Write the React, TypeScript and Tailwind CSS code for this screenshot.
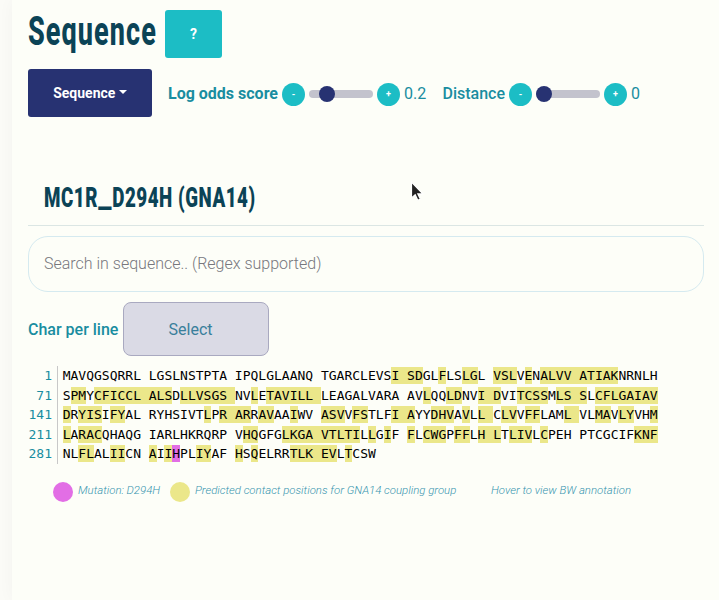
import React from "react";

/* Square brackets wrap contact positions, braces wrap the mutated residue. */
const ROWS: { start: number; seq: string }[] = [
  { start: 1, seq: "MAVQGSQRRL LGSLNSTPTA IPQLGLAANQ TGARCLEVS[I SD]GL[F]LS[LG]L [VSL]V[E]N[ALVV ATIAK]NRNLH" },
  { start: 71, seq: "S[PM]Y[CFICCL ALS]D[LLVSGS ]NV[L]E[TAVILL ]LEAGALVARA AV[L]QQ[LD]NV[I D]VI[TCSS]M[LS S]L[CFLGAIAV]" },
  { start: 141, seq: "[D]R[YIS]I[FY]AL RYHSIVT[L]P[R AR]R[AV]AA[I]WV [ASV]V[FS]TLF[I A]YY[DHV]A[V]L[L ]C[LV]V[FF]LAM[L ]VL[MA]V[LY]VH[M]" },
  { start: 211, seq: "[L]A[RAC]QHAQG IARLHKRQRP V[HQ]GFG[LKGA VTLTI]L[L]G[I]F [F]L[CWG]P[FF]L[H L]T[LIV]L[C]PEH PTCGCIF[KNF]" },
  { start: 281, seq: "NL[FL]AL[II]CN [A]I[I]{H}PL[IY]AF [H]S[Q]ELRR[TLK EV]L[T]CSW" },
];

function SequenceLine({ seq }: { seq: string }) {
  const parts = seq.match(/\[[^\]]*\]|\{[^}]*\}|[^[{]+/g) ?? [];
  return (
    <div className="h-[19.5px] whitespace-pre">
      {parts.map((p, i) => {
        if (p[0] === "[") return <span key={i} className="bg-[#ebe78a] py-px">{p.slice(1, -1)}</span>;
        if (p[0] === "{") return <span key={i} className="bg-[#e26ee5] py-px">{p.slice(1, -1)}</span>;
        return <span key={i}>{p}</span>;
      })}
    </div>
  );
}

function RoundButton({ label }: { label: string }) {
  return (
    <button className="flex h-[23px] w-[23px] shrink-0 items-center justify-center rounded-full bg-[#1cbdc5] text-[9px] font-bold leading-none text-white">
      {label}
    </button>
  );
}

function Slider({ value }: { value: number }) {
  return (
    <div className="mx-1 flex h-4 w-16 shrink-0 items-center">
      <div className="h-2 w-full rounded-full bg-[#c3c3cd]">
        <div className="-mt-1 h-4 w-4 rounded-full bg-[#273272]" style={{ marginLeft: value * 48 }} />
      </div>
    </div>
  );
}

export default function App() {
  return (
    <div className="h-[600px] w-[719px] overflow-hidden bg-[#fbfbf7] pl-3 font-['Roboto','Liberation_Sans',sans-serif] text-[#198da0]">
      <main className="h-full bg-[#fdfef8] pl-4 pr-[15px] shadow-[0_0_16px_rgba(0,0,0,0.035)]">
        <header className="flex h-[58px] items-start pt-[10px]">
          <h1 className="w-[137px] shrink-0 whitespace-nowrap text-[#0b4356]">
            <span className="inline-block origin-left scale-x-[0.675] text-[40px] font-extrabold leading-[44px] tracking-[1.6px]">Sequence</span>
          </h1>
          <button className="h-12 w-[57px] rounded-[3px] bg-[#1cbdc5] text-sm font-bold text-white">?</button>
        </header>

        <div className="mt-[11px] flex h-12 items-center">
          <button className="flex h-12 w-[124px] shrink-0 items-center justify-center rounded-[3px] bg-[#273272] text-sm font-bold text-white">
            Sequence
            <span className="mb-[3px] ml-[3.5px] h-0 w-0 border-x-[4.2px] border-t-[4.2px] border-x-transparent border-t-white" />
          </button>
          <div className="ml-4 flex w-[274.5px] shrink-0 items-center pt-[2px]">
            <span className="w-[114px] shrink-0 whitespace-nowrap font-bold leading-none">Log odds score</span>
            <RoundButton label="-" />
            <Slider value={0.21} />
            <RoundButton label="+" />
            <span className="ml-1 leading-none">0.2</span>
          </div>
          <div className="flex items-center pt-[2px]">
            <span className="w-[66.5px] shrink-0 whitespace-nowrap font-medium leading-none">Distance</span>
            <RoundButton label="-" />
            <Slider value={0} />
            <RoundButton label="+" />
            <span className="ml-1 leading-none">0</span>
          </div>
        </div>

        <div className="mt-[51px] h-[58px] border-b border-[#dbe6e4] pl-4 pt-[10px]">
          <h2 className="whitespace-nowrap text-[#0b4356]">
            <span className="inline-block origin-left scale-x-[0.67] text-[28px] font-black leading-10 tracking-[0.8px]">
              MC1R<span className="inline-block origin-left scale-x-[1.6] pr-[8px]">_</span>D294H (GNA14)
            </span>
          </h2>
        </div>

        <input
          className="mt-[10px] block h-14 w-full rounded-[20px] border border-[#d5eaf0] bg-transparent px-[15px] pb-[2px] text-base font-light text-[#777] outline-none placeholder:text-[#77777d]"
          placeholder="Search in sequence.. (Regex supported)"
        />

        <div className="mt-[10px] flex h-[54px] items-center">
          <span className="w-[95px] shrink-0 whitespace-nowrap pt-[2px] font-medium">Char per line</span>
          <button className="h-[54px] w-[146px] rounded-[8px] border border-[#a9a9c0] bg-[#dadae5] pr-[11px] pt-[2px] text-[#397f9b]">Select</button>
        </div>

        <div className="mt-[10px] flex h-[98px] font-['DejaVu_Sans_Mono',monospace] text-[13px] leading-[19.5px]">
          <div className="w-[30px] shrink-0 border-r border-[#c8c8c8] pr-[5px] text-right">
            {ROWS.map((r) => (
              <div key={r.start} className="h-[19.5px]">{r.start}</div>
            ))}
          </div>
          <div className="pl-[4.7px] text-black">
            {ROWS.map((r) => (
              <SequenceLine key={r.start} seq={r.seq} />
            ))}
          </div>
        </div>

        <footer className="mt-[17px] flex h-[22px] items-center whitespace-nowrap pl-[25px] text-[11.42px] font-light italic text-[#3795af]">
          <span className="h-5 w-5 shrink-0 rounded-full bg-[#e26ee5]" />
          <span className="ml-[5px] w-[92px] pb-[3px]">Mutation: D294H</span>
          <span className="h-5 w-5 shrink-0 rounded-full bg-[#ebe78a]" />
          <span className="ml-[5px] w-[296px] pb-[3px]">Predicted contact positions for GNA14 coupling group</span>
          <span className="pb-[3px]">Hover to view BW annotation</span>
        </footer>
      </main>

      <svg className="pointer-events-none absolute left-[409px] top-[179px]" width="18" height="24" viewBox="0 0 18 24">
        <path d="M2.5 3v16l3.7-3.2 2.6 5.5 2.5-1.2-2.5-5.2h5z" fill="#222" stroke="white" strokeWidth="1.2" />
      </svg>
    </div>
  );
}
